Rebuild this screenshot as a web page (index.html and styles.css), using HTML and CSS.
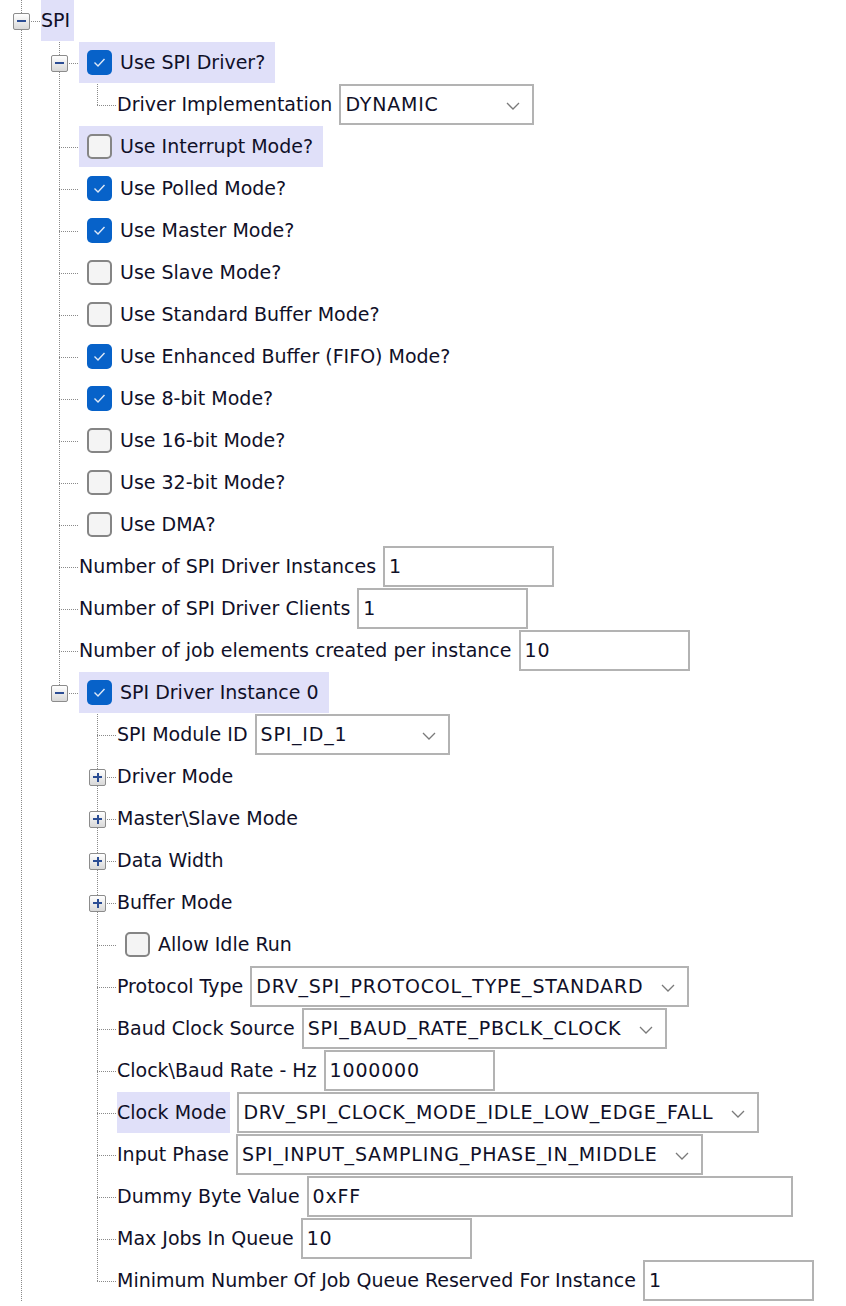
FILE: index.html
```html
<!DOCTYPE html>
<html>
<head>
<meta charset="utf-8">
<link rel="stylesheet" href="styles.css">
</head>
<body>
<div class="tree">
  <div class="row"><span class="c tee"><span class="exp minus"></span></span><div class="node hl"><span class="tx">SPI</span></div></div>

  <div class="row"><span class="c pipe"></span><span class="c tee"><span class="exp minus"></span></span><div class="node hl cbhl"><span class="cb on"><svg viewBox="0 0 25 25"><path d="M7.5 12.5l3.5 3.5 6.5-7"/></svg></span><span class="tx">Use SPI Driver?</span></div></div>
  <div class="row"><span class="c pipe"></span><span class="c pipe"></span><span class="c elbow"></span><div class="node"><span class="tx">Driver Implementation</span><span class="fld combo cw"><span class="val">DYNAMIC</span><svg class="chev" viewBox="0 0 14 8"><path d="M1 1l6 6 6-6"/></svg></span></div></div>
  <div class="row"><span class="c pipe"></span><span class="c tee"></span><div class="node hl cbhl"><span class="cb"></span><span class="tx">Use Interrupt Mode?</span></div></div>
  <div class="row"><span class="c pipe"></span><span class="c tee"></span><div class="node"><span class="cb on"><svg viewBox="0 0 25 25"><path d="M7.5 12.5l3.5 3.5 6.5-7"/></svg></span><span class="tx">Use Polled Mode?</span></div></div>
  <div class="row"><span class="c pipe"></span><span class="c tee"></span><div class="node"><span class="cb on"><svg viewBox="0 0 25 25"><path d="M7.5 12.5l3.5 3.5 6.5-7"/></svg></span><span class="tx">Use Master Mode?</span></div></div>
  <div class="row"><span class="c pipe"></span><span class="c tee"></span><div class="node"><span class="cb"></span><span class="tx">Use Slave Mode?</span></div></div>
  <div class="row"><span class="c pipe"></span><span class="c tee"></span><div class="node"><span class="cb"></span><span class="tx">Use Standard Buffer Mode?</span></div></div>
  <div class="row"><span class="c pipe"></span><span class="c tee"></span><div class="node"><span class="cb on"><svg viewBox="0 0 25 25"><path d="M7.5 12.5l3.5 3.5 6.5-7"/></svg></span><span class="tx">Use Enhanced Buffer (FIFO) Mode?</span></div></div>
  <div class="row"><span class="c pipe"></span><span class="c tee"></span><div class="node"><span class="cb on"><svg viewBox="0 0 25 25"><path d="M7.5 12.5l3.5 3.5 6.5-7"/></svg></span><span class="tx">Use 8-bit Mode?</span></div></div>
  <div class="row"><span class="c pipe"></span><span class="c tee"></span><div class="node"><span class="cb"></span><span class="tx">Use 16-bit Mode?</span></div></div>
  <div class="row"><span class="c pipe"></span><span class="c tee"></span><div class="node"><span class="cb"></span><span class="tx">Use 32-bit Mode?</span></div></div>
  <div class="row"><span class="c pipe"></span><span class="c tee"></span><div class="node"><span class="cb"></span><span class="tx">Use DMA?</span></div></div>
  <div class="row"><span class="c pipe"></span><span class="c tee"></span><div class="node"><span class="tx">Number of SPI Driver Instances</span><span class="fld w171"><span class="val">1</span></span></div></div>
  <div class="row"><span class="c pipe"></span><span class="c tee"></span><div class="node"><span class="tx">Number of SPI Driver Clients</span><span class="fld w171"><span class="val">1</span></span></div></div>
  <div class="row"><span class="c pipe"></span><span class="c tee"></span><div class="node"><span class="tx">Number of job elements created per instance</span><span class="fld w171"><span class="val">10</span></span></div></div>
  <div class="row"><span class="c pipe"></span><span class="c elbow"><span class="exp minus"></span></span><div class="node hl cbhl"><span class="cb on"><svg viewBox="0 0 25 25"><path d="M7.5 12.5l3.5 3.5 6.5-7"/></svg></span><span class="tx">SPI Driver Instance 0</span></div></div>

  <div class="row"><span class="c pipe"></span><span class="c"></span><span class="c tee"></span><div class="node"><span class="tx">SPI Module ID</span><span class="fld combo cw"><span class="val">SPI_ID_1</span><svg class="chev" viewBox="0 0 14 8"><path d="M1 1l6 6 6-6"/></svg></span></div></div>
  <div class="row"><span class="c pipe"></span><span class="c"></span><span class="c tee"><span class="exp plus"></span></span><div class="node"><span class="tx">Driver Mode</span></div></div>
  <div class="row"><span class="c pipe"></span><span class="c"></span><span class="c tee"><span class="exp plus"></span></span><div class="node"><span class="tx">Master\Slave Mode</span></div></div>
  <div class="row"><span class="c pipe"></span><span class="c"></span><span class="c tee"><span class="exp plus"></span></span><div class="node"><span class="tx">Data Width</span></div></div>
  <div class="row"><span class="c pipe"></span><span class="c"></span><span class="c tee"><span class="exp plus"></span></span><div class="node"><span class="tx">Buffer Mode</span></div></div>
  <div class="row"><span class="c pipe"></span><span class="c"></span><span class="c tee"></span><div class="node"><span class="cb"></span><span class="tx">Allow Idle Run</span></div></div>
  <div class="row"><span class="c pipe"></span><span class="c"></span><span class="c tee"></span><div class="node"><span class="tx">Protocol Type</span><span class="fld combo"><span class="val">DRV_SPI_PROTOCOL_TYPE_STANDARD</span><svg class="chev" viewBox="0 0 14 8"><path d="M1 1l6 6 6-6"/></svg></span></div></div>
  <div class="row"><span class="c pipe"></span><span class="c"></span><span class="c tee"></span><div class="node"><span class="tx">Baud Clock Source</span><span class="fld combo"><span class="val">SPI_BAUD_RATE_PBCLK_CLOCK</span><svg class="chev" viewBox="0 0 14 8"><path d="M1 1l6 6 6-6"/></svg></span></div></div>
  <div class="row"><span class="c pipe"></span><span class="c"></span><span class="c tee"></span><div class="node"><span class="tx">Clock\Baud Rate - Hz</span><span class="fld w171"><span class="val">1000000</span></span></div></div>
  <div class="row"><span class="c pipe"></span><span class="c"></span><span class="c tee"></span><div class="node"><span class="tx hl">Clock Mode</span><span class="fld combo"><span class="val">DRV_SPI_CLOCK_MODE_IDLE_LOW_EDGE_FALL</span><svg class="chev" viewBox="0 0 14 8"><path d="M1 1l6 6 6-6"/></svg></span></div></div>
  <div class="row"><span class="c pipe"></span><span class="c"></span><span class="c tee"></span><div class="node"><span class="tx">Input Phase</span><span class="fld combo"><span class="val">SPI_INPUT_SAMPLING_PHASE_IN_MIDDLE</span><svg class="chev" viewBox="0 0 14 8"><path d="M1 1l6 6 6-6"/></svg></span></div></div>
  <div class="row"><span class="c pipe"></span><span class="c"></span><span class="c tee"></span><div class="node"><span class="tx">Dummy Byte Value</span><span class="fld w486"><span class="val">0xFF</span></span></div></div>
  <div class="row"><span class="c pipe"></span><span class="c"></span><span class="c tee"></span><div class="node"><span class="tx">Max Jobs In Queue</span><span class="fld w171"><span class="val">10</span></span></div></div>
  <div class="row"><span class="c pipe"></span><span class="c"></span><span class="c elbow"></span><div class="node"><span class="tx">Minimum Number Of Job Queue Reserved For Instance</span><span class="fld w171"><span class="val">1</span></span></div></div>
</div>
</body>
</html>
```

FILE: styles.css
```css
html, body {
  margin: 0;
  padding: 0;
  background: #ffffff;
}
body {
  font-family: "DejaVu Sans", "Liberation Sans", sans-serif;
  font-size: 19px;
  color: #101028;
  width: 846px;
  height: 1306px;
  overflow: hidden;
}
.tree {
  padding-left: 2px;
}
.row {
  display: flex;
  height: 42px;
}
.c {
  flex: none;
  width: 38px;
  position: relative;
}
.c.pipe::before,
.c.tee::before,
.c.elbow::before {
  content: "";
  position: absolute;
  left: 19px;
  top: 0;
  width: 1px;
  height: 42px;
  background: repeating-linear-gradient(to bottom, #8a8a8a 0 1px, transparent 1px 2px);
}
.c.elbow::before {
  height: 22px;
}
.c.tee::after,
.c.elbow::after {
  content: "";
  position: absolute;
  left: 19px;
  right: -1px;
  top: 21px;
  height: 1px;
  background: repeating-linear-gradient(to right, #8a8a8a 0 1px, transparent 1px 2px);
}
.exp {
  position: absolute;
  z-index: 2;
  left: 11px;
  top: 13px;
  width: 17px;
  height: 17px;
  box-sizing: border-box;
  border: 1px solid #8c8c8c;
  border-radius: 2px;
  background: linear-gradient(#ffffff, #d8d8d8);
}
.exp::before {
  content: "";
  position: absolute;
  left: 3px;
  top: 6px;
  width: 9px;
  height: 2px;
  background: #2b4d94;
}
.exp.plus::after {
  content: "";
  position: absolute;
  left: 6.5px;
  top: 2.5px;
  width: 2px;
  height: 9px;
  background: #2b4d94;
}
.node {
  display: flex;
  align-items: center;
  height: 41px;
  margin-left: 1px;
  white-space: nowrap;
}
.node.hl {
  background: #e0e0f9;
  padding-right: 4px;
}
.node.hl.cbhl {
  padding-right: 10px;
}
.tx {
  display: flex;
  align-items: center;
  height: 41px;
  padding-bottom: 2px;
  box-sizing: border-box;
}
.tx.hl {
  background: #e0e0f9;
  padding-right: 4px;
}
.cb {
  flex: none;
  width: 25px;
  height: 25px;
  box-sizing: border-box;
  margin-left: 8px;
  margin-right: 8px;
  border: 2px solid #858585;
  border-radius: 5px;
  background: #f4f4f4;
}
.cb.on {
  border: none;
  background: #0762c9;
}
.cb svg {
  display: block;
  width: 25px;
  height: 25px;
}
.cb svg path {
  fill: none;
  stroke: #dfe9f7;
  stroke-width: 1.4;
}
.fld {
  flex: none;
  display: flex;
  align-items: center;
  height: 41px;
  box-sizing: border-box;
  margin-left: 7px;
  padding-left: 4px;
  padding-bottom: 2px;
  border: 2px solid #b3b3b3;
  background: #ffffff;
}
.val {
  letter-spacing: 0.8px;
}
.w171 {
  width: 171px;
}
.w486 {
  width: 486px;
}
.cw {
  width: 195px;
}
.chev {
  flex: none;
  width: 14px;
  height: 8px;
  margin-left: auto;
  padding-left: 18px;
  margin-right: 12px;
  margin-top: 4px;
}
.chev path {
  fill: none;
  stroke: #7a7a7a;
  stroke-width: 1.3;
}
```
